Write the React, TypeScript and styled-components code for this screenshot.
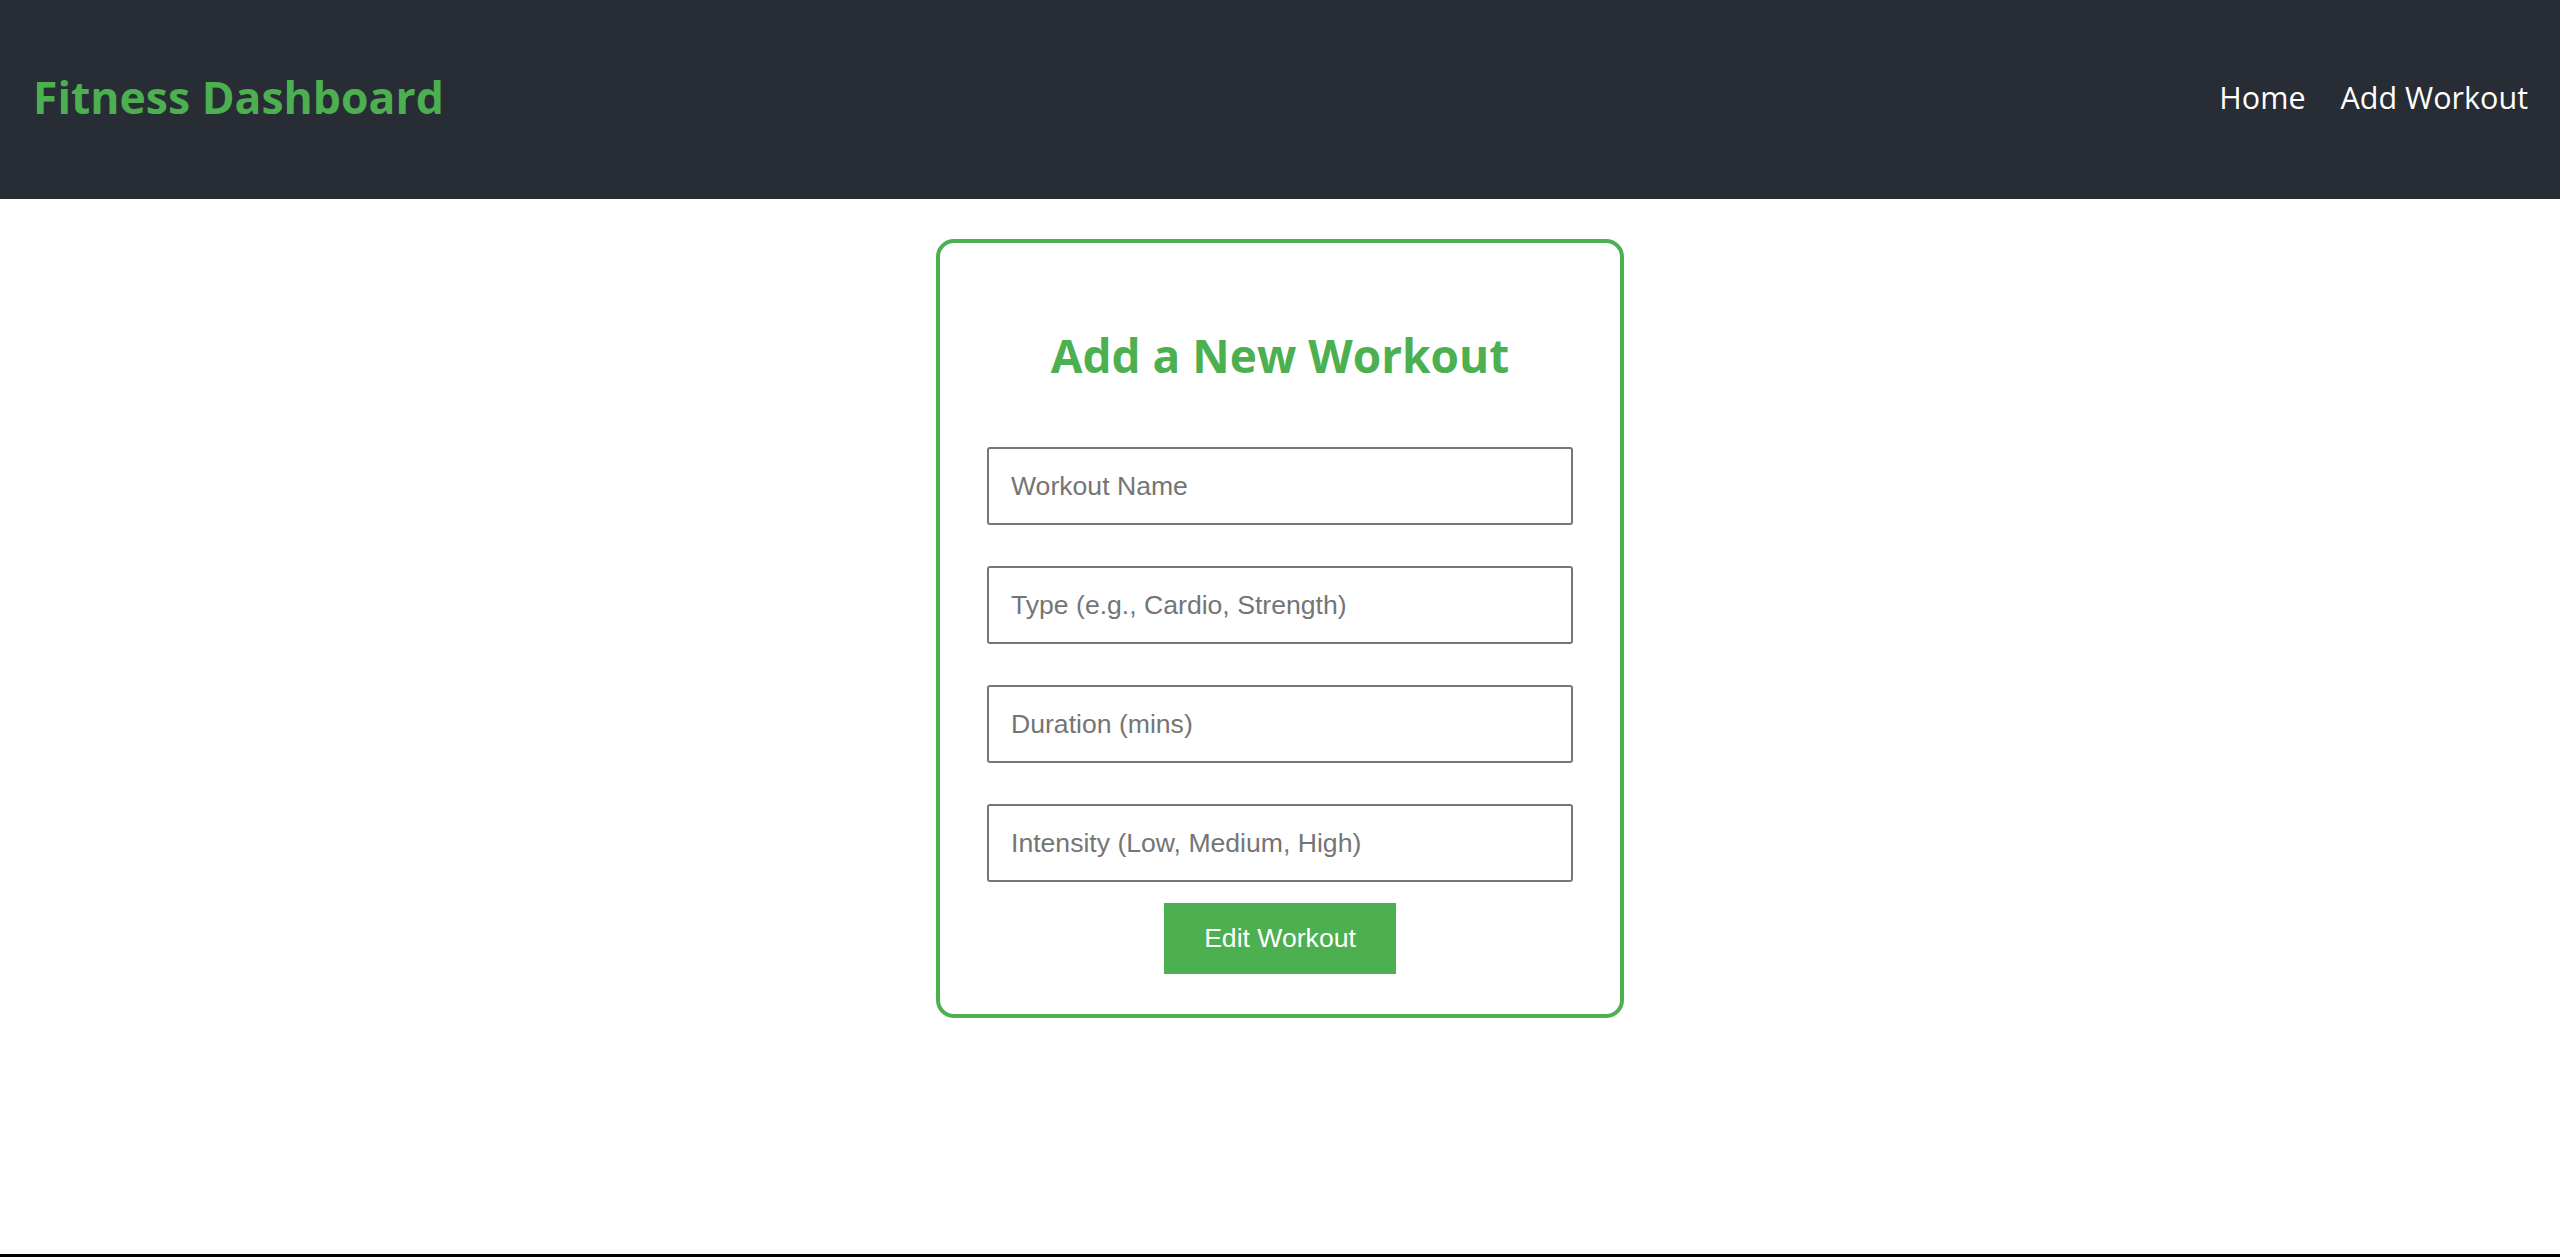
import React from 'react';
import styled, { createGlobalStyle } from 'styled-components';

const GlobalStyle = createGlobalStyle`
  * {
    box-sizing: border-box;
  }

  body {
    margin: 0;
    background: #ffffff;
    font-family: 'Open Sans', 'Noto Sans', sans-serif;
  }
`;

const Page = styled.div`
  min-height: 100vh;
  display: flex;
  flex-direction: column;
`;

const Header = styled.header`
  height: 199px;
  padding: 0 32px 6px 33px;
  background: #282c34;
  display: flex;
  align-items: center;
  justify-content: space-between;
`;

const Brand = styled.h1`
  margin: 0;
  font-size: 44.5px;
  font-weight: 700;
  color: #4caf50;
`;

const Nav = styled.nav`
  display: flex;
  align-items: center;
  gap: 35px;
`;

const NavLink = styled.a`
  color: #ffffff;
  font-size: 30.5px;
  font-weight: 400;
  text-decoration: none;
`;

const Main = styled.main`
  flex: 1;
  display: flex;
  justify-content: center;
  align-items: flex-start;
  padding-top: 40px;
`;

const Card = styled.section`
  width: 688px;
  padding: 40px 47px;
  border: 4px solid #4caf50;
  border-radius: 18px;
  background: #ffffff;
`;

const Title = styled.h2`
  margin: 41px 0 61px;
  font-size: 46px;
  line-height: 62px;
  font-weight: 700;
  text-align: center;
  color: #4caf50;
`;

const Form = styled.form`
  display: flex;
  flex-direction: column;
  align-items: stretch;
`;

const Input = styled.input`
  height: 78px;
  margin: 0 0 41px;
  padding: 0 22px;
  border: 2px solid #767676;
  border-radius: 3px;
  font-family: 'Liberation Sans', Arial, sans-serif;
  font-size: 26.6px;
  color: #222222;

  &::placeholder {
    color: #757575;
  }

  &:last-of-type {
    margin-bottom: 21px;
  }
`;

const SubmitButton = styled.button`
  align-self: center;
  width: 232px;
  height: 71px;
  border: none;
  border-radius: 0;
  background: #4caf50;
  color: #ffffff;
  font-family: 'Liberation Sans', Arial, sans-serif;
  font-size: 26.6px;
  cursor: pointer;
`;

const BottomRule = styled.div`
  height: 3px;
  background: #000000;
`;

const fields = [
  'Workout Name',
  'Type (e.g., Cardio, Strength)',
  'Duration (mins)',
  'Intensity (Low, Medium, High)'
];

const App: React.FC = () => {
  return (
    <Page>
      <GlobalStyle />
      <Header>
        <Brand>Fitness Dashboard</Brand>
        <Nav>
          <NavLink href="#">Home</NavLink>
          <NavLink href="#">Add Workout</NavLink>
        </Nav>
      </Header>
      <Main>
        <Card>
          <Title>Add a New Workout</Title>
          <Form onSubmit={e => e.preventDefault()}>
            {fields.map(placeholder => (
              <Input key={placeholder} type="text" placeholder={placeholder} />
            ))}
            <SubmitButton type="submit">Edit Workout</SubmitButton>
          </Form>
        </Card>
      </Main>
      <BottomRule />
    </Page>
  );
};

export default App;
